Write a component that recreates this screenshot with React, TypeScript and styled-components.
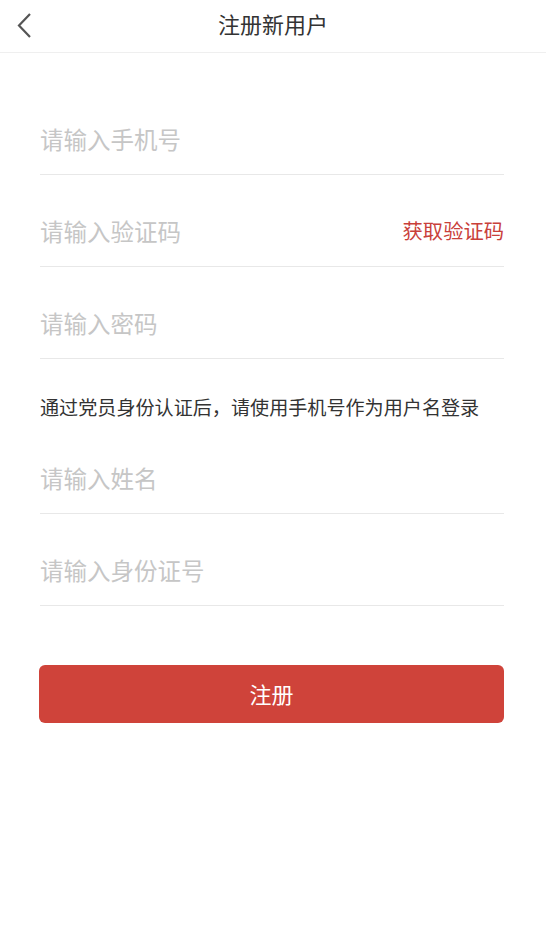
import styled, { createGlobalStyle } from 'styled-components'

const GlobalStyle = createGlobalStyle`
    html, body {
        margin: 0;
        padding: 0;
        background: #fff;
    }
    body {
        font-family: "Noto Sans CJK SC", "Noto Sans", sans-serif;
    }
`

const Page = styled.div`
    width: 546px;
    min-height: 945px;
    background: #fff;
`

const Header = styled.header`
    position: relative;
    height: 53px;
    padding-bottom: 7px;
    box-sizing: border-box;
    display: flex;
    align-items: center;
    justify-content: center;
    border-bottom: 1px solid #efefef;
`

const BackButton = styled.div`
    position: absolute;
    left: 12px;
    top: 10px;
    width: 24px;
    height: 30px;
    display: flex;
    align-items: center;
    justify-content: center;
    cursor: pointer;
`

const Title = styled.h1`
    margin: 0;
    font-size: 22px;
    font-weight: 400;
    color: #333;
    line-height: 1;
`

const Form = styled.div`
    padding: 30px 42px 0 40px;
    display: flex;
    flex-direction: column;
`

const Field = styled.div`
    height: 91px;
    display: flex;
    align-items: flex-end;
    justify-content: space-between;
    border-bottom: 1px solid #e8e8e8;
    box-sizing: content-box;
`

const FieldInner = styled.div`
    flex: 1;
    display: flex;
    align-items: center;
    justify-content: space-between;
    height: 24px;
    margin-bottom: 23px;
`

const Placeholder = styled.span`
    font-size: 23.5px;
    color: #c6c6c6;
    line-height: 24px;
`

const CodeLink = styled.span`
    font-size: 20.3px;
    color: #c9403a;
    line-height: 24px;
    margin-top: -2px;
    cursor: pointer;
`

const Hint = styled.p`
    margin: 0;
    padding: 38px 0 5px;
    font-size: 19.1px;
    line-height: 20px;
    color: #333;
    white-space: nowrap;
`

const SubmitButton = styled.button`
    margin: 59px 0 0 -1px;
    height: 58px;
    padding: 0 0 3px;
    border: none;
    border-radius: 6px;
    background: #cf433a;
    color: #fff;
    font-family: inherit;
    font-size: 22px;
    cursor: pointer;
`

const fields1 = ['请输入手机号', '请输入验证码', '请输入密码']
const fields2 = ['请输入姓名', '请输入身份证号']

export default function App() {
    return (
        <Page>
            <GlobalStyle />
            <Header>
                <BackButton>
                    <svg width="16" height="26" viewBox="0 0 16 26">
                        <polyline points="14,2 3,13.5 14,25" fill="none" stroke="#555" strokeWidth="2.2" />
                    </svg>
                </BackButton>
                <Title>注册新用户</Title>
            </Header>
            <Form>
                {fields1.map(f => (
                    <Field key={f}>
                        <FieldInner>
                            <Placeholder>{f}</Placeholder>
                            {f === '请输入验证码' && <CodeLink>获取验证码</CodeLink>}
                        </FieldInner>
                    </Field>
                ))}
                <Hint>通过党员身份认证后，请使用手机号作为用户名登录</Hint>
                {fields2.map(f => (
                    <Field key={f}>
                        <FieldInner>
                            <Placeholder>{f}</Placeholder>
                        </FieldInner>
                    </Field>
                ))}
                <SubmitButton>注册</SubmitButton>
            </Form>
        </Page>
    )
}
